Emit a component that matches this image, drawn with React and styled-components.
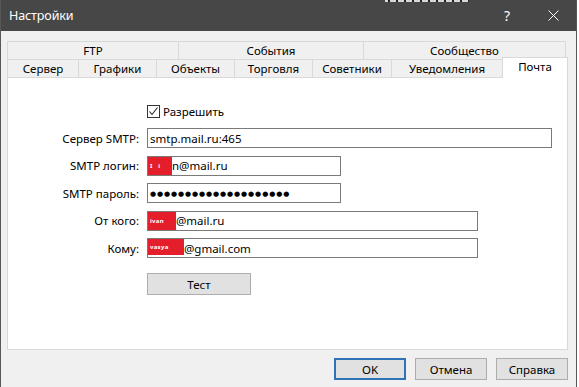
import React from 'react';
import styled, { createGlobalStyle } from 'styled-components';

const Global = createGlobalStyle`
  html, body { margin: 0; padding: 0; background: #ffffff; }
  body { font-family: "Noto Sans", "Open Sans", sans-serif; font-size: 11.5px; color: #000; }
  * { box-sizing: border-box; }
`;

const Window = styled.div`
  position: relative;
  width: 577px;
  height: 387px;
  display: flex;
  flex-direction: column;
  background: #f0f0f0;
  border-left: 1px solid #585858;
  border-right: 1px solid #585858;
  overflow: hidden;
`;

const TitleBar = styled.div`
  height: 31px;
  flex: none;
  display: flex;
  align-items: center;
  background: #474747;
  color: #fff;
  padding-left: 8px;
`;

const Title = styled.div`
  flex: 1;
  font-size: 12.5px;
  letter-spacing: -0.1px;
`;

const TitleButton = styled.div`
  width: 46px;
  height: 31px;
  display: flex;
  align-items: center;
  justify-content: center;
  font-size: 14px;
  color: #fff;
`;

const BehindFragment = styled.div`
  position: absolute;
  left: 384px;
  top: 0;
  width: 84px;
  height: 2px;
  background: repeating-linear-gradient(90deg, #d8d8d8 0 3px, #222 3px 5px, #d8d8d8 5px 8px);
`;

const Body = styled.div`
  flex: 1;
  display: flex;
  flex-direction: column;
  padding: 10px 8px 0 6px;
`;

const TabRow = styled.div`
  display: flex;
  align-items: flex-end;
  height: 19px;
  margin-top: ${p => (p.$second ? '-1px' : '0')};
`;

const Tab = styled.div`
  position: relative;
  flex: none;
  width: ${p => p.$w}px;
  height: ${p => (p.$active ? 21 : 19)}px;
  margin-left: ${p => (p.$first ? 0 : -1)}px;
  display: flex;
  align-items: center;
  justify-content: center;
  padding-bottom: ${p => (p.$active ? 3 : 1)}px;
  background: ${p => (p.$active ? '#fff' : '#f0f0f0')};
  border: 1px solid #d9d9d9;
  border-bottom: ${p => (p.$active ? 'none' : '1px solid #d9d9d9')};
  z-index: ${p => (p.$active ? 2 : 1)};
  white-space: nowrap;
`;

const Panel = styled.div`
  position: relative;
  width: 561px;
  height: 273px;
  margin-top: -1px;
  background: #fff;
  border: 1px solid #d9d9d9;
  padding-top: 27px;
`;

const Form = styled.div`
  display: grid;
  grid-template-columns: 131px 1fr;
  column-gap: 8px;
  row-gap: 7.5px;
  align-items: center;
`;

const CheckRow = styled.label`
  grid-column: 2;
  display: flex;
  align-items: center;
  height: 13px;
  margin-bottom: 2.5px;
  gap: 3px;
`;

const CheckBox = styled.span`
  width: 13px;
  height: 13px;
  border: 1px solid #333;
  background: #fff;
  display: flex;
  align-items: center;
  justify-content: center;
`;

const Label = styled.div`
  text-align: right;
  white-space: nowrap;
`;

const Field = styled.div`
  width: ${p => p.$w}px;
  height: 20px;
  border: 1px solid #7a7a7a;
  background: #fff;
  display: flex;
  align-items: center;
  padding-left: ${p => (p.$redacted ? 0 : 2)}px;
  white-space: nowrap;
  overflow: hidden;
`;

const Redaction = styled.span`
  flex: none;
  width: ${p => p.$w}px;
  height: ${p => p.$h}px;
  margin-left: -1px;
  margin-top: ${p => p.$top}px;
  background: #e41f2b;
  color: #fff;
  font-size: 6px;
  font-weight: bold;
  letter-spacing: 0.3px;
  display: flex;
  align-items: center;
  padding-left: 3px;
  overflow: hidden;
`;

const Dots = styled.span`
  font-family: "DejaVu Sans", sans-serif;
  font-size: 7px;
  letter-spacing: 0.9px;
  padding-top: 1px;
`;

const TestButton = styled.div`
  grid-column: 2;
  width: 104px;
  height: 22px;
  margin-top: 7.5px;
  background: #e1e1e1;
  border: 1px solid #adadad;
  display: flex;
  align-items: center;
  justify-content: center;
`;

const Footer = styled.div`
  display: flex;
  justify-content: flex-end;
  gap: 9px;
  padding-top: 8px;
`;

const Button = styled.div`
  width: 72px;
  height: 22px;
  background: #e1e1e1;
  border: 1px solid ${p => (p.$default ? '#2e73b8' : '#adadad')};
  box-shadow: ${p => (p.$default ? 'inset 0 0 0 1px #2e73b8' : 'none')};
  display: flex;
  align-items: center;
  justify-content: center;
`;

const row1 = [
  { t: 'FTP', w: 172 },
  { t: 'События', w: 186 },
  { t: 'Сообщество', w: 203 },
];

const row2 = [
  { t: 'Сервер', w: 72 },
  { t: 'Графики', w: 79 },
  { t: 'Объекты', w: 79 },
  { t: 'Торговля', w: 79 },
  { t: 'Советники', w: 80 },
  { t: 'Уведомления', w: 112 },
  { t: 'Почта', w: 66, active: true },
];

export default function App() {
  return (
    <>
      <Global />
      <Window>
        <TitleBar>
          <Title>Настройки</Title>
          <TitleButton>?</TitleButton>
          <TitleButton>
            <svg width="11" height="11" viewBox="0 0 11 11">
              <path d="M0.5 0.5 L10.5 10.5 M10.5 0.5 L0.5 10.5" stroke="#fff" strokeWidth="1" fill="none" />
            </svg>
          </TitleButton>
        </TitleBar>
        <BehindFragment />
        <Body>
          <TabRow>
            {row1.map((t, i) => (
              <Tab key={t.t} $w={t.w} $first={i === 0}>{t.t}</Tab>
            ))}
          </TabRow>
          <TabRow $second>
            {row2.map((t, i) => (
              <Tab key={t.t} $w={t.w} $first={i === 0} $active={t.active}>{t.t}</Tab>
            ))}
          </TabRow>
          <Panel>
            <Form>
              <CheckRow>
                <CheckBox>
                  <svg width="11" height="11" viewBox="0 0 11 11">
                    <path d="M1.5 5.5 L4 8.5 L9.5 1.5" stroke="#222" strokeWidth="1.1" fill="none" />
                  </svg>
                </CheckBox>
                Разрешить
              </CheckRow>

              <Label>Сервер SMTP:</Label>
              <Field $w={405}>smtp.mail.ru:465</Field>

              <Label>SMTP логин:</Label>
              <Field $w={194} $redacted>
                <Redaction $w={25} $h={18} $top={1}>I&nbsp;&nbsp;&nbsp;i</Redaction>
                n@mail.ru
              </Field>

              <Label>SMTP пароль:</Label>
              <Field $w={194}>
                <Dots>●●●●●●●●●●●●●●●●●●●●</Dots>
              </Field>

              <Label>От кого:</Label>
              <Field $w={331} $redacted>
                <Redaction $w={29} $h={18} $top={0}>ivan</Redaction>
                @mail.ru
              </Field>

              <Label>Кому:</Label>
              <Field $w={331} $redacted>
                <Redaction $w={37} $h={16} $top={-2}>vasya</Redaction>
                @gmail.com
              </Field>

              <TestButton>Тест</TestButton>
            </Form>
          </Panel>
          <Footer>
            <Button $default>OK</Button>
            <Button>Отмена</Button>
            <Button>Справка</Button>
          </Footer>
        </Body>
      </Window>
    </>
  );
}
